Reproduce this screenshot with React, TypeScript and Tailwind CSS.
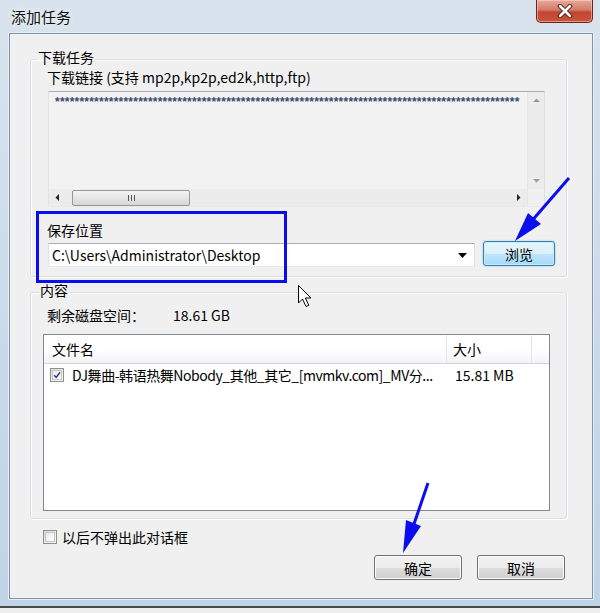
import type { ReactNode } from "react";

const Checkbox = ({ checked = false }: { checked?: boolean }) => (
  <span className="flex h-[14px] w-[14px] shrink-0 items-center justify-center border border-[#8e8f8f] bg-[linear-gradient(135deg,#dcdcdc,#fbfbfb)]">
    <span className="flex h-[10px] w-[10px] items-center justify-center border border-[#c6c6c6] bg-[linear-gradient(135deg,#e8e8e8,#ffffff)]">
      {checked && (
        <svg width="10" height="10" viewBox="0 0 10 10">
          <path d="M1.5 5.2 L4 8 L8.8 1.5" fill="none" stroke="#1f3c8f" strokeWidth="1.8" />
        </svg>
      )}
    </span>
  </span>
);

const Button = ({ children, focused = false }: { children: ReactNode; focused?: boolean }) =>
  focused ? (
    <button className="h-[25px] w-[72px] rounded-[3px] border border-[#3c7fb1] bg-[linear-gradient(to_bottom,#eaf6fd_0%,#d9f0fc_50%,#bee6fd_51%,#a7d9f5_100%)] text-[14px] leading-[16px] text-black shadow-[inset_0_0_0_1px_#c5ebfe,0_0_2px_#6fc3f0]">
      {children}
    </button>
  ) : (
    <button className="h-[25px] w-[88px] rounded-[3px] border border-[#707070] bg-[linear-gradient(to_bottom,#f2f2f2_0%,#ebebeb_50%,#dddddd_51%,#cfcfcf_100%)] text-[14px] leading-[16px] text-black shadow-[inset_0_0_0_1px_#fcfcfc]">
      {children}
    </button>
  );

const Arrow = ({ d, light = false }: { d: string; light?: boolean }) => (
  <svg width="7" height="7" viewBox="0 0 7 7">
    <path d={d} fill={light ? "#9b9b9b" : "#222"} />
  </svg>
);

export default function App() {
  const stars = "*".repeat(95);

  return (
    <div className="relative h-[613px] w-[600px] overflow-hidden bg-[linear-gradient(to_bottom,#d9e3ed_0%,#cfdcea_40%,#bfd3e8_100%)] font-['Noto_Sans_CJK_SC','Noto_Sans',sans-serif] text-black">
      {/* title bar */}
      <div className="relative flex h-[33px] items-center pl-[11px]">
        <span className="text-[15px] leading-[16px] text-[#111] [text-shadow:0_0_6px_#fff]">添加任务</span>
        <div className="absolute right-[7px] top-0 flex h-[23px] w-[57px] items-center justify-center rounded-b-[5px] border border-t-0 border-[#6b2419] bg-[linear-gradient(to_bottom,#e9a99b_0%,#d47a68_45%,#c24530_55%,#c9553c_100%)] shadow-[inset_0_0_0_1px_rgba(255,220,210,0.5)]">
          <svg width="16" height="14" viewBox="0 0 16 14">
            <path d="M3 2 L13 12 M13 2 L3 12" stroke="#4a1a12" strokeWidth="4.5" strokeLinecap="round" />
            <path d="M3 2 L13 12 M13 2 L3 12" stroke="#fff" strokeWidth="2.6" strokeLinecap="round" />
          </svg>
        </div>
      </div>

      {/* client area */}
      <div className="ml-[9px] flex h-[566px] w-[584px] flex-col border border-[#7f93aa] bg-[#f0f0f0] text-[14px] leading-[16px] shadow-[0_0_0_1px_#e6eef7]">
        <fieldset className="ml-[20px] mt-[15px] w-[537px] rounded-[3px] border border-[#d5dfe5] p-0 shadow-[inset_1px_1px_0_#fff,1px_1px_0_#fff]">
          <legend className="ml-[6px] px-[1px] pb-[4px] leading-[16px]">下载任务</legend>
          <div className="pb-[9px] pl-[17px]">
            <div className="-ml-px">下载链接 (支持 mp2p,kp2p,ed2k,http,ftp)</div>

            <div className="mt-[6px] flex h-[116px] w-[497px] border border-[#abadb3] border-b-[#e3e9ef] border-l-[#e2e3ea] border-r-[#dbdfe6] bg-[#f2f2f2]">
              <div className="flex w-[478px] flex-col">
                <div className="h-[97px] overflow-hidden pl-[6px] pt-[3px] font-['Liberation_Sans',sans-serif] text-[12px] font-bold leading-[14px] tracking-[0.22px] whitespace-nowrap text-[#3a4a6a]">
                  {stars}
                </div>
                <div className="flex h-[17px] items-center bg-[#ececec]">
                  <div className="flex w-[17px] justify-center">
                    <Arrow d="M5 0 L5 7 L1.5 3.5 Z" />
                  </div>
                  <div className="ml-[6px] flex h-[16px] w-[118px] items-center justify-center gap-[2px] rounded-[2px] border border-[#979797] bg-[linear-gradient(to_bottom,#f4f4f4,#e6e6e6_50%,#d6d6d6)]">
                    <span className="h-[6px] w-px bg-[#555]" />
                    <span className="h-[6px] w-px bg-[#555]" />
                    <span className="h-[6px] w-px bg-[#555]" />
                  </div>
                  <div className="flex-1" />
                  <div className="flex w-[17px] justify-center">
                    <Arrow d="M2 0 L2 7 L5.5 3.5 Z" />
                  </div>
                </div>
              </div>
              <div className="flex w-[17px] flex-col border-l border-[#e6e6e6] bg-[#ececec]">
                <div className="flex h-[17px] items-center justify-center">
                  <Arrow d="M0 5 L7 5 L3.5 1.5 Z" light />
                </div>
                <div className="flex-1" />
                <div className="flex h-[17px] items-center justify-center">
                  <Arrow d="M0 2 L7 2 L3.5 5.5 Z" light />
                </div>
                <div className="h-[17px] bg-[#f0f0f0]" />
              </div>
            </div>

            <div className="-ml-px mt-[15px]">保存位置</div>
            <div className="mt-[3px] flex items-start gap-[8px]">
              <div className="mt-[2px] flex h-[24px] w-[427px] items-center justify-between border border-[#abadb3] border-b-[#e3e9ef] border-l-[#e2e3ea] border-r-[#dbdfe6] bg-white pl-[3px] pr-[7px]">
                <span>C:\Users\Administrator\Desktop</span>
                <svg width="9" height="5" viewBox="0 0 9 5">
                  <path d="M0 0 L9 0 L4.5 5 Z" fill="#000" />
                </svg>
              </div>
              <Button focused>浏览</Button>
            </div>
          </div>
        </fieldset>

        <fieldset className="ml-[20px] mt-[5px] w-[537px] rounded-[3px] border border-[#d5dfe5] p-0 shadow-[inset_1px_1px_0_#fff,1px_1px_0_#fff]">
          <legend className="ml-[8px] px-[1px] pb-[4px] leading-[16px]">内容</legend>
          <div className="pb-[7px] pl-[12px]">
            <div className="mt-[5px] flex pl-[4px]">
              <span className="w-[126px]">剩余磁盘空间：</span>
              <span>18.61 GB</span>
            </div>

            <div className="mt-[11px] h-[177px] w-[507px] border border-[#828790] bg-white">
              <div className="flex h-[29px] border-b border-[#d5d5d5] bg-[linear-gradient(to_bottom,#ffffff_0%,#ffffff_50%,#f3f4f6_100%)]">
                <div className="flex w-[403px] items-center border-r border-[#e3e4e6] pl-[8px]">文件名</div>
                <div className="flex w-[85px] items-center border-r border-[#e3e4e6] pl-[6px]">大小</div>
                <div className="flex-1" />
              </div>
              <div className="flex h-[22px] items-center">
                <div className="flex w-[403px] items-center pl-[6px]">
                  <Checkbox checked />
                  <span className="ml-[8px] whitespace-nowrap tracking-[-0.45px]">DJ舞曲-韩语热舞Nobody_其他_其它_[mvmkv.com]_MV分...</span>
                </div>
                <div className="pl-[8px]">15.81 MB</div>
              </div>
            </div>
          </div>
        </fieldset>

        <div className="ml-[33px] mt-[10px] flex items-center gap-[5px]">
          <Checkbox />
          <span>以后不弹出此对话框</span>
        </div>

        <div className="mt-[10px] flex justify-end gap-[15px] pr-[27px]">
          <Button>确定</Button>
          <Button>取消</Button>
        </div>
      </div>
      <div className="mt-[7px] h-[2px] bg-[#4b4b4b]" />
      <div className="h-[6px] bg-[#eeeeee]" />

      {/* annotations */}
      <svg className="pointer-events-none absolute inset-0" width="600" height="613" viewBox="0 0 600 613">
        <rect x="37.5" y="212.5" width="248" height="69" fill="none" stroke="#0c0cf0" strokeWidth="3" />
        <line x1="569" y1="178" x2="530" y2="223" stroke="#0c0cf0" strokeWidth="3" />
        <polygon points="515,241 541,224 528,213" fill="#0c0cf0" />
        <line x1="428" y1="483" x2="414" y2="524" stroke="#0c0cf0" strokeWidth="3" />
        <polygon points="403,553 421,526 406,520" fill="#0c0cf0" />
        <path
          d="M298.5 285.5 L298.5 303 L302.5 299 L306 306.5 L308.8 305.3 L305.4 298 L311 298 Z"
          fill="#fff"
          stroke="#000"
          strokeWidth="1"
        />
      </svg>
    </div>
  );
}
